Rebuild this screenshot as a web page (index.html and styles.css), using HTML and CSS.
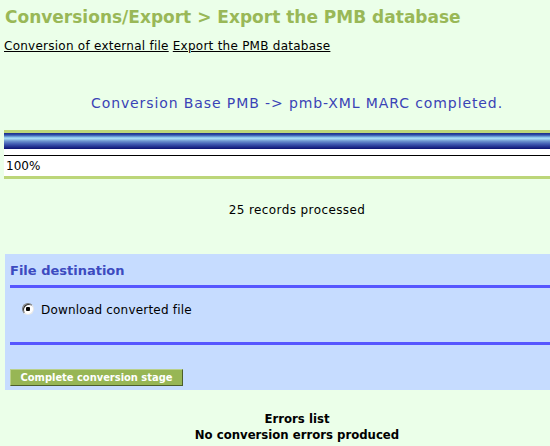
FILE: index.html
```html
<!DOCTYPE html>
<html>
<head>
<meta charset="utf-8">
<link rel="stylesheet" href="styles.css">
</head>
<body>
<div class="page">
  <h1 class="title">Conversions/Export &gt; Export the PMB database</h1>
  <div class="tabs"><a href="#">Conversion of external file</a> <a href="#">Export the PMB database</a></div>
  <div class="centered msg">Conversion Base PMB -&gt; pmb-XML MARC completed.</div>
  <div class="progress">
    <div class="bar"></div>
    <div class="pct">100%</div>
  </div>
  <div class="centered count">25 records processed</div>
  <form class="form">
    <h3 class="form-title">File destination</h3>
    <label class="row"><span class="radio"></span>Download converted file</label>
    <div class="actions"><button type="button" class="btn">Complete conversion stage</button></div>
  </form>
  <div class="centered errors">
    <div>Errors list</div>
    <div>No conversion errors produced</div>
  </div>
</div>
</body>
</html>
```
FILE: styles.css
```css
html, body {
  margin: 0;
  padding: 0;
  background: #ebffe9;
  font-family: "DejaVu Sans", Verdana, sans-serif;
  color: #000;
  overflow: hidden;
}
.page {
  width: 550px;
  height: 446px;
}
.title {
  margin: 0;
  padding: 7px 0 0 5px;
  font-size: 17px;
  font-weight: bold;
  color: #99b857;
  line-height: 20px;
}
.tabs {
  padding: 11px 0 0 4px;
  font-size: 12px;
  line-height: 16px;
  letter-spacing: 0.25px;
}
.tabs a {
  color: #000;
  text-decoration: underline;
}
.centered {
  text-align: center;
  padding-left: 44px;
}
.msg {
  padding-top: 40px;
  font-size: 14px;
  line-height: 18px;
  letter-spacing: 0.9px;
  color: #3a43b6;
}
.progress {
  margin: 18px 0 0 4px;
  background: #fff;
  border-top: 3px solid #bcd679;
  border-bottom: 3px solid #bcd679;
}
.bar {
  height: 16px;
  background: linear-gradient(to bottom, #1b2a8a 0%, #2d4fa8 12%, #8fc8ee 28%, #a8dcf5 35%, #6f95cf 50%, #4a67b8 65%, #2c3f9c 80%, #0c1270 100%);
}
.pct {
  margin-top: 6px;
  border-top: 1px solid #000;
  height: 20px;
  padding-left: 2px;
  font-size: 12px;
  line-height: 20px;
}
.count {
  padding-top: 23px;
  font-size: 12px;
  line-height: 16px;
  letter-spacing: 0.4px;
}
.form {
  margin: 36px 0 0 5px;
  background: #c6dcff;
  padding: 8px 0 4px 5px;
}
.form-title {
  margin: 0;
  font-size: 13px;
  font-weight: bold;
  color: #3c4bbf;
  line-height: 18px;
  padding-bottom: 5px;
  border-bottom: 3px solid #5656ff;
}
.row {
  display: flex;
  align-items: flex-start;
  gap: 7px;
  padding: 14px 0 0 12px;
  height: 40px;
  font-size: 12px;
  line-height: 16px;
  letter-spacing: 0.2px;
  border-bottom: 3px solid #5656ff;
}
.radio {
  width: 10px;
  height: 10px;
  border-radius: 50%;
  margin-top: 1px;
  background: radial-gradient(circle, #000 0 2px, #fff 2.5px);
  border: 1px solid;
  border-color: #7a7a7a #e8e8e8 #e8e8e8 #7a7a7a;
  box-shadow: inset 1px 1px 0 #333;
}
.actions {
  padding-top: 24px;
}
.btn {
  display: block;
  width: 173px;
  height: 17px;
  padding: 0;
  margin: 0;
  background: #97b655;
  color: #fff;
  font-family: "DejaVu Sans Condensed", "DejaVu Sans", sans-serif;
  font-weight: bold;
  font-size: 11px;
  line-height: 14px;
  border: 1px solid;
  border-color: #b9d08a #4c5e2a #4c5e2a #b9d08a;
}
.errors {
  padding-top: 21px;
  font-family: "DejaVu Sans Condensed", "DejaVu Sans", sans-serif;
  font-weight: bold;
  font-size: 13px;
  line-height: 16px;
}
```
